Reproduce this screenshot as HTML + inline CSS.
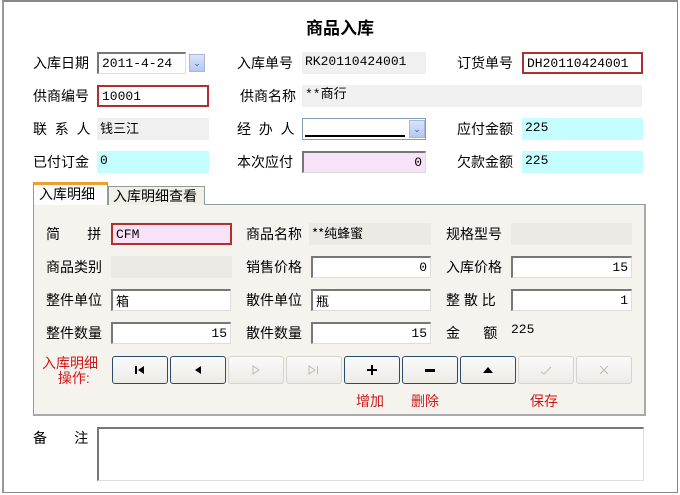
<!DOCTYPE html>
<html><head><meta charset="utf-8"><style>
*{margin:0;padding:0;box-sizing:border-box}
body{width:680px;height:495px;background:#fff;position:relative;overflow:hidden;font-family:"Liberation Sans","Noto Sans CJK SC",sans-serif;font-size:13px;color:#000}
.a{position:absolute;white-space:nowrap}
.l{position:absolute;font-size:14px;line-height:22px;white-space:nowrap}
.f{position:absolute;height:22px;font-family:"Liberation Mono","Noto Sans CJK SC",monospace;font-size:13px;line-height:20px;padding:0 3px;white-space:nowrap}
.g{background:#f0f0f0}
.c{background:#c4fefe}
.in{background:#fff;border:1px solid #999;border-top:2px solid #777;border-left:2px solid #777;border-right:1px solid #ddd;border-bottom:1px solid #ddd}
.red{border:2px solid #b03030;background:#fff}
.r{text-align:right}
.btn{position:absolute;top:356px;width:56px;height:28px;border:1px solid #2c4a6a;border-radius:3px;background:linear-gradient(#fafafa,#ecebe6);display:flex;align-items:center;justify-content:center}
.btn.d{border-color:#d4d3cd;color:#bbb}
.rt{position:absolute;color:#d01818;font-size:14px;white-space:nowrap}
.ddb{position:absolute;width:16px;height:18px;background:linear-gradient(#d8e4fa,#b4c8f0);border:1px solid #a8b8d8;color:#3d5da0;font-size:9px;text-align:center;line-height:16px}
</style></head><body>
<div class="a" style="left:2px;top:0;width:676px;height:493px;border:1px solid #888;border-top:2px solid #888;border-left:2px solid #999"></div>
<div class="a" style="left:0;top:14px;width:680px;text-align:center;font-weight:bold;font-size:17px">商品入库</div>

<div class="l" style="left:33px;top:52px">入库日期</div>
<div class="f in" style="left:97px;top:52px;width:89px">2011-4-24</div>
<div class="ddb" style="left:189px;top:54px;">&#8964;</div>
<div class="l" style="left:237px;top:52px">入库单号</div>
<div class="f g" style="left:302px;top:52px;width:124px">RK20110424001</div>
<div class="l" style="left:457px;top:52px">订货单号</div>
<div class="f red" style="left:522px;top:52px;width:121px">DH20110424001</div>

<div class="l" style="left:33px;top:85px">供商编号</div>
<div class="f red" style="left:97px;top:85px;width:112px">10001</div>
<div class="l" style="left:240px;top:85px">供商名称</div>
<div class="f g" style="left:302px;top:85px;width:340px">**商行</div>

<div class="l" style="left:33px;top:118px">联&nbsp;&nbsp;系&nbsp;&nbsp;人</div>
<div class="f g" style="left:97px;top:118px;width:112px;font-family:'Noto Sans CJK SC',sans-serif">钱三江</div>
<div class="l" style="left:237px;top:118px">经&nbsp;&nbsp;办&nbsp;&nbsp;人</div>
<div class="a" style="left:302px;top:118px;width:124px;height:22px;border:1px solid #7f9db9;background:#fff"></div>
<div class="a" style="left:305px;top:135px;width:100px;height:2px;background:#000"></div>
<div class="ddb" style="left:409px;top:120px;">&#8964;</div>
<div class="l" style="left:457px;top:118px">应付金额</div>
<div class="f c" style="left:522px;top:118px;width:121px">225</div>

<div class="l" style="left:33px;top:151px">已付订金</div>
<div class="f c" style="left:97px;top:151px;width:112px">0</div>
<div class="l" style="left:237px;top:151px">本次应付</div>
<div class="f in r" style="left:302px;top:151px;width:124px;background:#f8e2f8">0</div>
<div class="l" style="left:457px;top:151px">欠款金额</div>
<div class="f c" style="left:522px;top:151px;width:121px">225</div>

<div class="a" style="left:33px;top:204px;width:613px;height:212px;border:1px solid #919b9c;border-right:2px solid #aaa;border-bottom:2px solid #aaa;background:#f4f3ee"></div>
<div class="a" style="left:108px;top:186px;width:97px;height:19px;border:1px solid #919b9c;border-bottom:none;background:#f0efe8;font-size:14px;line-height:18px;padding-left:4px">入库明细查看</div>
<div class="a" style="left:33px;top:182px;width:75px;height:23px;border:1px solid #919b9c;border-top:3px solid #f0a030;border-bottom:none;background:#fcfcfe;font-size:14px;line-height:19px;padding-left:5px">入库明细</div>

<div class="l" style="left:46px;top:223px">简&nbsp;&nbsp;&nbsp;&nbsp;&nbsp;&nbsp;&nbsp;拼</div>
<div class="f red" style="left:111px;top:223px;width:121px;background:#f8e2f8">CFM</div>
<div class="l" style="left:246px;top:223px">商品名称</div>
<div class="f g" style="left:309px;top:223px;width:122px;background:#ebeae5;font-family:'Noto Sans CJK SC',sans-serif">**纯蜂蜜</div>
<div class="l" style="left:446px;top:223px">规格型号</div>
<div class="f g" style="left:511px;top:223px;width:121px;background:#ebeae5"></div>

<div class="l" style="left:46px;top:256px">商品类别</div>
<div class="f g" style="left:111px;top:256px;width:121px;background:#ebeae5"></div>
<div class="l" style="left:246px;top:256px">销售价格</div>
<div class="f in r" style="left:311px;top:256px;width:120px">0</div>
<div class="l" style="left:446px;top:256px">入库价格</div>
<div class="f in r" style="left:511px;top:256px;width:121px">15</div>

<div class="l" style="left:46px;top:289px">整件单位</div>
<div class="f in" style="left:111px;top:289px;width:120px;font-family:'Noto Sans CJK SC',sans-serif">箱</div>
<div class="l" style="left:246px;top:289px">散件单位</div>
<div class="f in" style="left:311px;top:289px;width:120px;font-family:'Noto Sans CJK SC',sans-serif">瓶</div>
<div class="l" style="left:446px;top:289px">整&nbsp;散&nbsp;比</div>
<div class="f in r" style="left:511px;top:289px;width:121px">1</div>

<div class="l" style="left:46px;top:322px">整件数量</div>
<div class="f in r" style="left:111px;top:322px;width:120px">15</div>
<div class="l" style="left:246px;top:322px">散件数量</div>
<div class="f in r" style="left:311px;top:322px;width:120px">15</div>
<div class="l" style="left:446px;top:322px">金&nbsp;&nbsp;&nbsp;&nbsp;&nbsp;&nbsp;额</div>
<div class="f" style="left:508px;top:320px;width:121px">225</div>

<div class="rt" style="left:42px;top:356px;line-height:15px;text-align:center">入库明细<br>&nbsp;&nbsp;操作:</div>
<div class="btn" style="left:112px"><svg width="12" height="10"><rect x="1" y="1" width="2" height="8"/><path d="M10 1L4 5L10 9Z"/></svg></div>
<div class="btn" style="left:170px"><svg width="10" height="10"><path d="M8 1L2 5L8 9Z"/></svg></div>
<div class="btn d" style="left:228px"><svg width="10" height="10"><path d="M2 1L8 5L2 9Z" fill="none" stroke="#bbb"/></svg></div>
<div class="btn d" style="left:286px"><svg width="12" height="10"><path d="M1 1L7 5L1 9Z" fill="none" stroke="#bbb"/><rect x="9" y="1" width="1" height="8" fill="#bbb"/></svg></div>
<div class="btn" style="left:344px"><svg width="10" height="10"><path d="M4 0h2v4h4v2h-4v4h-2v-4h-4v-2h4z"/></svg></div>
<div class="btn" style="left:402px"><svg width="10" height="10"><rect x="0" y="4" width="10" height="3"/></svg></div>
<div class="btn" style="left:460px"><svg width="12" height="8"><path d="M1 7L6 1L11 7Z"/></svg></div>
<div class="btn d" style="left:518px"><svg width="12" height="10"><path d="M1 7L4 9L11 2" fill="none" stroke="#bbb"/></svg></div>
<div class="btn d" style="left:576px"><svg width="10" height="10"><path d="M1 1L9 9M9 1L1 9" stroke="#bbb"/></svg></div>
<div class="rt" style="left:356px;top:391px">增加</div>
<div class="rt" style="left:411px;top:391px">删除</div>
<div class="rt" style="left:530px;top:391px">保存</div>

<div class="l" style="left:33px;top:427px">备&nbsp;&nbsp;&nbsp;&nbsp;&nbsp;&nbsp;&nbsp;注</div>
<div class="a in" style="left:97px;top:427px;width:547px;height:54px"></div>
</body></html>
